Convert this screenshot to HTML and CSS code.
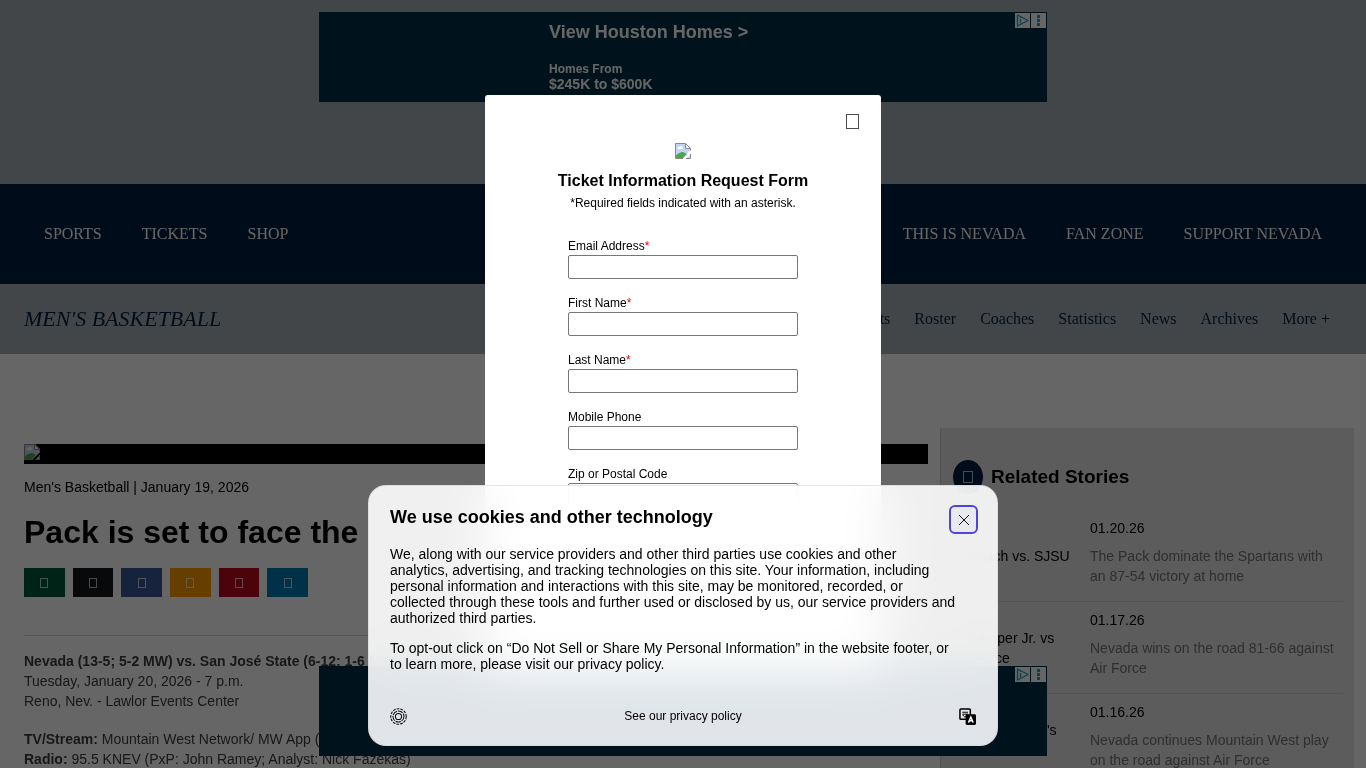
FILE: index.html
```html
<!DOCTYPE html>
<html lang="en">
<head>
    <meta charset="UTF-8">
    <meta name="viewport" content="width=device-width, initial-scale=1.0">
    <title>Men's Basketball - Nevada Athletics</title>
    <link rel="stylesheet" href="styles.css">
</head>
<body>
    <!-- shared icons -->
    <svg class="sprite" aria-hidden="true">
        <symbol id="broken" viewBox="0 0 16 16">
            <path d="M0 0h11l5 5v3L8 16H0z" fill="#fff"/>
            <path d="M1 1h9v5h5v1.500L8 15H1z" fill="#c3d5f4"/>
            <path d="M2.500 5.500c0-1.500 1-2 2-1.500 1-1.500 3-1 3 .5 1 0 1 1.500 0 1.500h-4c-.7 0-1-.2-1-.5z" fill="#fff"/>
            <path d="M1 15v-2.500C3 10.500 5.500 9 8 9l4 2-4 4z" fill="#4da64a"/>
            <path d="M8 15.500H.5V.5h10l5 5v2M10.500.5v5h5" fill="none" stroke="#8b8b8b"/>
            <path d="M16 11v5h-5z" fill="#c3d5f4"/>
            <path d="M15.500 11v4.500H11" fill="none" stroke="#8b8b8b"/>
        </symbol>
        <symbol id="adchoices" viewBox="0 0 32 16">
            <path d="M0 1h15v15H0zM16 1h15v15H16z" fill="#fff"/>
            <path d="M2.500 3v11L13 8.500z" fill="none" stroke="#1ba3c8" stroke-width="1.300" stroke-linejoin="round"/>
            <path d="M5.500 7v4.500M5.500 5v1" stroke="#1ba3c8" stroke-width="1.300"/>
            <path d="M22 3h3v3h-3zM22 7h3v3h-3zM22 11h3v3h-3z" fill="#1ba3c8"/>
        </symbol>
    </svg>

    <div class="ad-top">
        <a href="#" class="ad">
            <span class="ad-copy">
                <b class="ad-title">View Houston Homes &gt;</b>
                <b class="ad-from">Homes From</b>
                <b class="ad-price">$245K to $600K</b>
            </span>
            <svg class="ad-marks"><use href="#adchoices"/></svg>
        </a>
    </div>

    <nav class="main-nav">
        <div class="nav-group">
            <a href="#">SPORTS</a>
            <a href="#">TICKETS</a>
            <a href="#">SHOP</a>
        </div>
        <div class="nav-group">
            <a href="#">THIS IS NEVADA</a>
            <a href="#">FAN ZONE</a>
            <a href="#">SUPPORT NEVADA</a>
        </div>
    </nav>

    <nav class="sport-nav">
        <h2><a href="#">MEN'S BASKETBALL</a></h2>
        <div class="sport-links">
            <a href="#">Schedule &amp; Results</a>
            <a href="#">Roster</a>
            <a href="#">Coaches</a>
            <a href="#">Statistics</a>
            <a href="#">News</a>
            <a href="#">Archives</a>
            <a href="#">More +</a>
        </div>
    </nav>

    <main class="content">
        <article class="story">
            <div class="story-image"><svg class="broken"><use href="#broken"/></svg></div>
            <p class="story-meta">Men's Basketball | January 19, 2026</p>
            <h1>Pack is set to face the</h1>
            <div class="share">
                <button class="share-print" aria-label="Print"><i class="glyph"></i></button>
                <button class="share-x" aria-label="X"><i class="glyph"></i></button>
                <button class="share-facebook" aria-label="Facebook"><i class="glyph"></i></button>
                <button class="share-email" aria-label="Email"><i class="glyph"></i></button>
                <button class="share-pinterest" aria-label="Pinterest"><i class="glyph"></i></button>
                <button class="share-linkedin" aria-label="LinkedIn"><i class="glyph"></i></button>
            </div>
            <div class="story-body">
                <p><b>Nevada (13-5; 5-2 MW) vs. San José State (6-12; 1-6 MW)</b><br>
                Tuesday, January 20, 2026 - 7 p.m.<br>
                Reno, Nev. - Lawlor Events Center</p>
                <p><b>TV/Stream:</b> Mountain West Network/ MW App (John Ramey)<br>
                <b>Radio:</b> 95.5 KNEV (PxP: John Ramey; Analyst: Nick Fazekas)</p>
            </div>
        </article>

        <aside class="related">
            <h3><span class="related-icon"><i class="glyph"></i></span>Related Stories</h3>
            <a href="#" class="related-item">
                <span class="related-alt">J. Coach vs. SJSU</span>
                <span class="related-text">
                    <time>01.20.26</time>
                    <span class="related-title">The Pack dominate the Spartans with an 87-54 victory at home</span>
                </span>
            </a>
            <a href="#" class="related-item">
                <span class="related-alt">J. Camper Jr. vs Air Force</span>
                <span class="related-text">
                    <time>01.17.26</time>
                    <span class="related-title">Nevada wins on the road 81-66 against Air Force</span>
                </span>
            </a>
            <a href="#" class="related-item">
                <span class="related-alt">Wolf Pack men's team</span>
                <span class="related-text">
                    <time>01.16.26</time>
                    <span class="related-title">Nevada continues Mountain West play on the road against Air Force</span>
                </span>
            </a>
        </aside>
    </main>

    <div class="ad-sticky">
        <a href="#" class="ad" aria-label="Advertisement">
            <svg class="ad-marks"><use href="#adchoices"/></svg>
        </a>
    </div>

    <div class="overlay">
        <div class="modal" role="dialog" aria-labelledby="formTitle">
            <button class="modal-close" aria-label="Close"><i class="glyph"></i></button>
            <svg class="broken"><use href="#broken"/></svg>
            <h2 id="formTitle">Ticket Information Request Form</h2>
            <p class="modal-note">*Required fields indicated with an asterisk.</p>
            <form class="ticket-form">
                <div class="field">
                    <label for="email">Email Address<span class="req">*</span></label>
                    <input type="email" id="email">
                </div>
                <div class="field">
                    <label for="firstName">First Name<span class="req">*</span></label>
                    <input type="text" id="firstName">
                </div>
                <div class="field">
                    <label for="lastName">Last Name<span class="req">*</span></label>
                    <input type="text" id="lastName">
                </div>
                <div class="field">
                    <label for="phone">Mobile Phone</label>
                    <input type="tel" id="phone">
                </div>
                <div class="field">
                    <label for="zip">Zip or Postal Code</label>
                    <input type="text" id="zip">
                </div>
            </form>
        </div>
    </div>

    <section class="cookies" role="dialog" aria-labelledby="cookieTitle">
        <div class="cookies-head">
            <h2 id="cookieTitle">We use cookies and other technology</h2>
            <button class="cookies-close" aria-label="Close">
                <svg viewBox="0 0 12 12"><path d="M1 1l10 10M11 1L1 11" stroke="#111"/></svg>
            </button>
        </div>
        <div class="cookies-body">
            <p>We, along with our service providers and other third parties use cookies and other analytics, advertising, and tracking technologies on this site. Your information, including personal information and interactions with this site, may be monitored, recorded, or collected through these tools and further used or disclosed by us, our service providers and authorized third parties.</p>
            <p>To opt-out click on “Do Not Sell or Share My Personal Information” in the website footer, or to learn more, please visit our privacy policy.</p>
        </div>
        <div class="cookies-foot">
            <button class="icon-btn" aria-label="Settings">
                <svg viewBox="0 0 16 16" fill="none" stroke="#111">
                    <circle cx="8" cy="8" r="7.300" stroke-dasharray="2.600 1"/>
                    <circle cx="8" cy="8" r="5.200" stroke-dasharray="5 .8"/>
                    <circle cx="8" cy="8" r="2.900"/>
                </svg>
            </button>
            <a href="#">See our privacy policy</a>
            <button class="icon-btn" aria-label="Language">
                <svg viewBox="0 0 18 18">
                    <rect x="1" y="1" width="11" height="11" rx="1" fill="none" stroke="#000" stroke-width="1.600"/>
                    <path d="M3.500 4.500h6M4 6.500h5M4 6.500c.5 2 1.500 3 3 3.200M9 6l-2 3.500" fill="none" stroke="#000"/>
                    <rect x="7" y="6.500" width="11" height="11.500" rx="1.500"/>
                    <path d="M10 15.500l2.500-6 2.500 6M11 13.500h3" fill="none" stroke="#fff" stroke-width="1.500"/>
                </svg>
            </button>
        </div>
    </section>
</body>
</html>
```
FILE: styles.css
```css
* { box-sizing: border-box; }
body { margin: 0; background: #fff; color: #000; font-family: "Liberation Sans", Arial, sans-serif; font-size: 14px; line-height: 20px; height: 100vh; overflow: hidden; }
h1, h2, h3, p { margin: 0; }
a { color: inherit; text-decoration: none; }
button { padding: 0; border: none; background: none; font: inherit; cursor: pointer; }
.sprite { display: none; }
.broken { display: block; width: 16px; height: 16px; }
.glyph { display: block; width: 8px; height: 10px; border: 1px solid currentColor; opacity: 0.7; }

/* ads */
.ad-top { height: 184px; padding-top: 12px; background: #a7aeb6; }
.ad { position: relative; display: block; width: 728px; height: 90px; margin: 0 auto; padding: 10px 0 0 230px; background: #003047; color: #fff; }
.ad-copy { display: flex; flex-direction: column; }
.ad-title { margin-bottom: 20px; font-size: 18px; line-height: 20px; }
.ad-from { font-size: 12px; line-height: 14px; }
.ad-price { font-size: 14px; line-height: 16px; }
.ad-marks { position: absolute; top: 0; right: 0; width: 32px; height: 16px; }
.ad-sticky { position: fixed; left: 0; right: 0; bottom: 12px; }

/* navigation */
.main-nav { display: flex; justify-content: space-between; align-items: center; height: 100px; padding: 0 24px; background: #041e42; color: #fff; font: 16px/20px "Liberation Serif", "Times New Roman", serif; }
.nav-group { display: flex; }
.nav-group a { padding: 0 20px; }
.sport-nav { display: flex; justify-content: space-between; align-items: center; height: 70px; padding: 0 24px; background: #a7aeb6; color: #041e42; font: 16px/20px "Liberation Serif", "Times New Roman", serif; }
.sport-nav h2 { font-size: 22px; font-weight: normal; font-style: italic; }
.sport-links { display: flex; }
.sport-links a { padding: 0 12px; }

/* story */
.content { display: flex; margin-top: 74px; padding: 0 12px; }
.story { flex: 1; padding: 16px 12px; }
.story-image { height: 20px; background: #000; }
.story-meta { margin-top: 13px; }
h1 { margin-top: 15px; font-size: 32px; line-height: 40px; }
.share { display: grid; grid-template-columns: repeat(6, 1fr); gap: 8px; width: 284px; margin-top: 16px; }
.share button { display: flex; justify-content: center; align-items: center; height: 29px; color: #fff; }
.share-print { background: #00593a; }
.share-x { background: #14171a; }
.share-facebook { background: #3b5998; }
.share-email { background: #ff9d00; }
.share-pinterest { background: #bd081c; }
.share-linkedin { background: #007bb5; }
.story-body { margin-top: 38px; padding-top: 15px; border-top: 1px solid #d4d4d4; color: #3c3c3c; }
.story-body p { margin-bottom: 18px; }

/* related stories */
.related { width: 414px; padding: 32px 11px 0 12px; background: #e6e6e6; border-left: 1px solid #cfcfcf; }
.related h3 { display: flex; align-items: center; gap: 8px; margin-bottom: 16px; font-size: 19px; line-height: 34px; }
.related-icon { display: flex; justify-content: center; align-items: center; width: 30px; height: 34px; border-radius: 50%; background: #041e42; color: #fff; }
.related-icon .glyph { width: 10px; height: 12px; }
.related-item { display: grid; grid-template-columns: 121px 1fr; gap: 16px; align-items: center; height: 92px; border-bottom: 1px solid #cfcfcf; }
.related-text { align-self: start; padding: 8px 8px 0 0; }
.related-text time { display: block; margin-bottom: 8px; }
.related-title { display: block; color: #757575; }

/* ticket form */
.overlay { position: fixed; inset: 0; display: flex; justify-content: center; align-items: center; background: rgba(0, 0, 0, 0.6); }
.modal { position: relative; display: flex; flex-direction: column; align-items: center; width: 396px; height: calc(100vh - 190px); padding-top: 48px; background: #fff; border-radius: 3px; overflow: hidden; }
.modal-close { position: absolute; top: 19px; right: 22px; }
.modal-close .glyph { width: 13px; height: 15px; }
.modal h2 { margin-top: 12px; font-size: 16px; line-height: 20px; }
.modal-note { margin-top: 4px; font-size: 12px; line-height: 16px; }
.ticket-form { width: 230px; margin-top: 27px; }
.field { margin-bottom: 16px; }
.field label { display: block; margin-bottom: 1px; font-size: 12px; line-height: 16px; }
.field input { display: block; width: 100%; height: 24px; border: 1px solid #767676; border-radius: 2px; }
.req { color: #e00; }

/* cookie notice */
.cookies { position: fixed; left: 0; right: 0; bottom: 22px; width: 630px; margin: 0 auto; padding: 19px 20px; background: linear-gradient(rgba(255, 255, 255, 0.9) 60%, rgba(249, 251, 255, 0.9) 80%); border: 1px solid rgba(200, 200, 200, 0.4); border-radius: 18px; backdrop-filter: blur(24px) saturate(200%); }
.cookies-head { display: flex; justify-content: space-between; align-items: center; padding-left: 1px; }
.cookies-head h2 { margin-bottom: 5px; font-size: 18px; line-height: 24px; }
.cookies-close { display: flex; justify-content: center; align-items: center; width: 29px; height: 29px; margin-right: -1px; border: 2px solid #4f46d8; border-radius: 6px; background: #e9e9f1; }
.cookies-close svg { width: 12px; height: 12px; }
.cookies-body { padding: 12px 20px 0 1px; line-height: 16px; }
.cookies-body p { margin-bottom: 14px; }
.cookies-foot { display: flex; justify-content: space-between; align-items: center; margin-top: 34px; padding: 0 1px; font-size: 12px; }
.icon-btn svg { display: block; width: 17px; height: 17px; }
```
